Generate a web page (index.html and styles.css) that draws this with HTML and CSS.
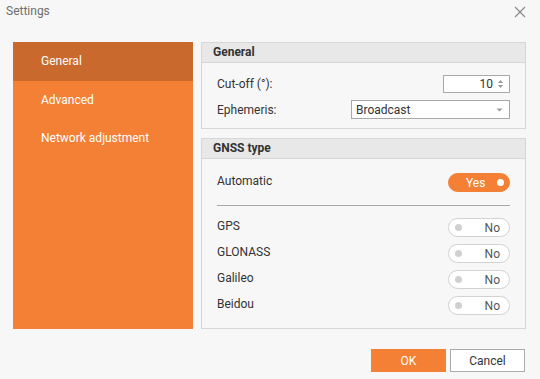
FILE: index.html
```html
<!DOCTYPE html>
<html>

<head>
    <title>Settings</title>
    <meta name="viewport" content="width=device-width, initial-scale=1">
    <link rel="stylesheet" href="styles.css">
</head>

<body>
    <div class="dialog">
        <div class="titleBar">
            <span class="title">Settings</span>
            <button class="close" title="Close">
                <svg width="12" height="12" viewBox="0 0 12 12">
                    <path d="M1 1 L11 11 M11 1 L1 11" stroke="#8a8a8a" stroke-width="1.2" fill="none" />
                </svg>
            </button>
        </div>

        <div class="main">
            <div class="menu">
                <div class="menuItem active">General</div>
                <div class="menuItem">Advanced</div>
                <div class="menuItem">Network adjustment</div>
            </div>

            <div class="panels">
                <div class="panel">
                    <div class="panelHead">General</div>
                    <div class="panelBody form">
                        <span class="label">Cut-off (°):</span>
                        <div class="numberBox">
                            <span>10</span>
                            <svg width="7" height="10" viewBox="0 0 7 10">
                                <path d="M1 4 L3.5 1 L6 4 Z M1 6 L3.5 9 L6 6 Z" fill="#9a9a9a" />
                            </svg>
                        </div>
                        <span class="label">Ephemeris:</span>
                        <div class="selectBox">
                            <span>Broadcast</span>
                            <svg width="7" height="4" viewBox="0 0 7 4">
                                <path d="M0.5 0.5 L6.5 0.5 L3.5 3.5 Z" fill="#9a9a9a" />
                            </svg>
                        </div>
                    </div>
                </div>

                <div class="panel grow">
                    <div class="panelHead">GNSS type</div>
                    <div class="panelBody">
                        <div class="row">
                            <span class="label">Automatic</span>
                            <div class="toggle on"><span>Yes</span><i class="dot"></i></div>
                        </div>
                        <div class="divider"></div>
                        <div class="list">
                            <div class="row">
                                <span class="label">GPS</span>
                                <div class="toggle"><i class="dot"></i><span>No</span></div>
                            </div>
                            <div class="row">
                                <span class="label">GLONASS</span>
                                <div class="toggle"><i class="dot"></i><span>No</span></div>
                            </div>
                            <div class="row">
                                <span class="label">Galileo</span>
                                <div class="toggle"><i class="dot"></i><span>No</span></div>
                            </div>
                            <div class="row">
                                <span class="label">Beidou</span>
                                <div class="toggle"><i class="dot"></i><span>No</span></div>
                            </div>
                        </div>
                    </div>
                </div>
            </div>
        </div>

        <div class="footer">
            <button class="btn ok">OK</button>
            <button class="btn cancel">Cancel</button>
        </div>
    </div>
</body>

</html>
```

FILE: styles.css
```css
* {
    box-sizing: border-box
}

body {
    margin: 0;
    font-family: Roboto, "Liberation Sans", sans-serif;
    font-size: 12px;
    color: #333;
    background: #f7f7f7;
}

.dialog {
    width: 540px;
    height: 379px;
    display: flex;
    flex-direction: column;
}

.titleBar {
    height: 42px;
    display: flex;
    align-items: flex-start;
    justify-content: space-between;
    padding: 3px 14px 0 6px;
}

.title {
    line-height: 16px;
    color: #6e6e6e;
}

.close {
    background: none;
    border: none;
    padding: 0;
    margin-top: 3px;
    width: 12px;
    height: 12px;
    display: flex;
}

.main {
    display: flex;
    gap: 8px;
    padding-left: 13px;
    height: 287px;
}

.menu {
    width: 180px;
    background: #f48035;
    display: flex;
    flex-direction: column;
}

.menuItem {
    height: 38px;
    line-height: 38px;
    padding-left: 28px;
    color: #fff;
}

.menuItem.active {
    height: 39px;
    line-height: 39px;
    background: #c9692e;
}

.panels {
    width: 325px;
    display: flex;
    flex-direction: column;
    gap: 9px;
}

.panel {
    border: 1px solid #d6d6d6;
    background: #f7f7f7;
    display: flex;
    flex-direction: column;
}

.panel.grow {
    flex: 1;
}

.panelHead {
    height: 20px;
    line-height: 19px;
    padding-left: 11px;
    font-weight: bold;
    color: #333;
    background: #e8e8e8;
    border-bottom: 1px solid #d6d6d6;
}

.panelBody {
    padding: 14px 15px 10px 15px;
}

.form {
    display: grid;
    grid-template-columns: 1fr auto;
    row-gap: 7px;
    align-items: center;
    padding: 12px 15px 9px 15px;
}

.numberBox,
.selectBox {
    height: 18px;
    border: 1px solid #a8a8a8;
    background: #fff;
    display: flex;
    align-items: center;
    justify-self: end;
}

.numberBox {
    width: 67px;
    justify-content: flex-end;
    gap: 4px;
    padding-right: 5px;
}

.selectBox {
    width: 159px;
    height: 19px;
    justify-content: space-between;
    padding: 0 6px 0 4px;
}

.row {
    display: flex;
    justify-content: space-between;
    align-items: flex-start;
}

.row .label {
    line-height: 16px;
}

.divider {
    height: 1px;
    background: #a8a8a8;
    margin: 13px 0 12px;
}

.list {
    display: flex;
    flex-direction: column;
    gap: 7px;
}

.toggle {
    width: 62px;
    height: 19px;
    border-radius: 10px;
    border: 1px solid #d2d2d2;
    background: #fff;
    display: flex;
    align-items: center;
    justify-content: space-between;
    padding: 0 9px 0 6px;
    color: #555;
}

.toggle .dot {
    width: 7px;
    height: 7px;
    border-radius: 50%;
    background: #d0d0d0;
}

.toggle.on {
    background: #f48035;
    border-color: #f48035;
    color: #fff;
    padding: 0 5px 0 17px;
}

.toggle.on .dot {
    background: #fff;
}

.footer {
    display: flex;
    justify-content: flex-end;
    gap: 4px;
    padding: 20px 15px 0 0;
}

.btn {
    width: 75px;
    height: 23px;
    font-family: inherit;
    font-size: 12px;
    padding: 0;
}

.ok {
    background: #f48035;
    border: none;
    color: #fff;
}

.cancel {
    background: #fff;
    border: 1px solid #ababab;
    color: #333;
}
```
